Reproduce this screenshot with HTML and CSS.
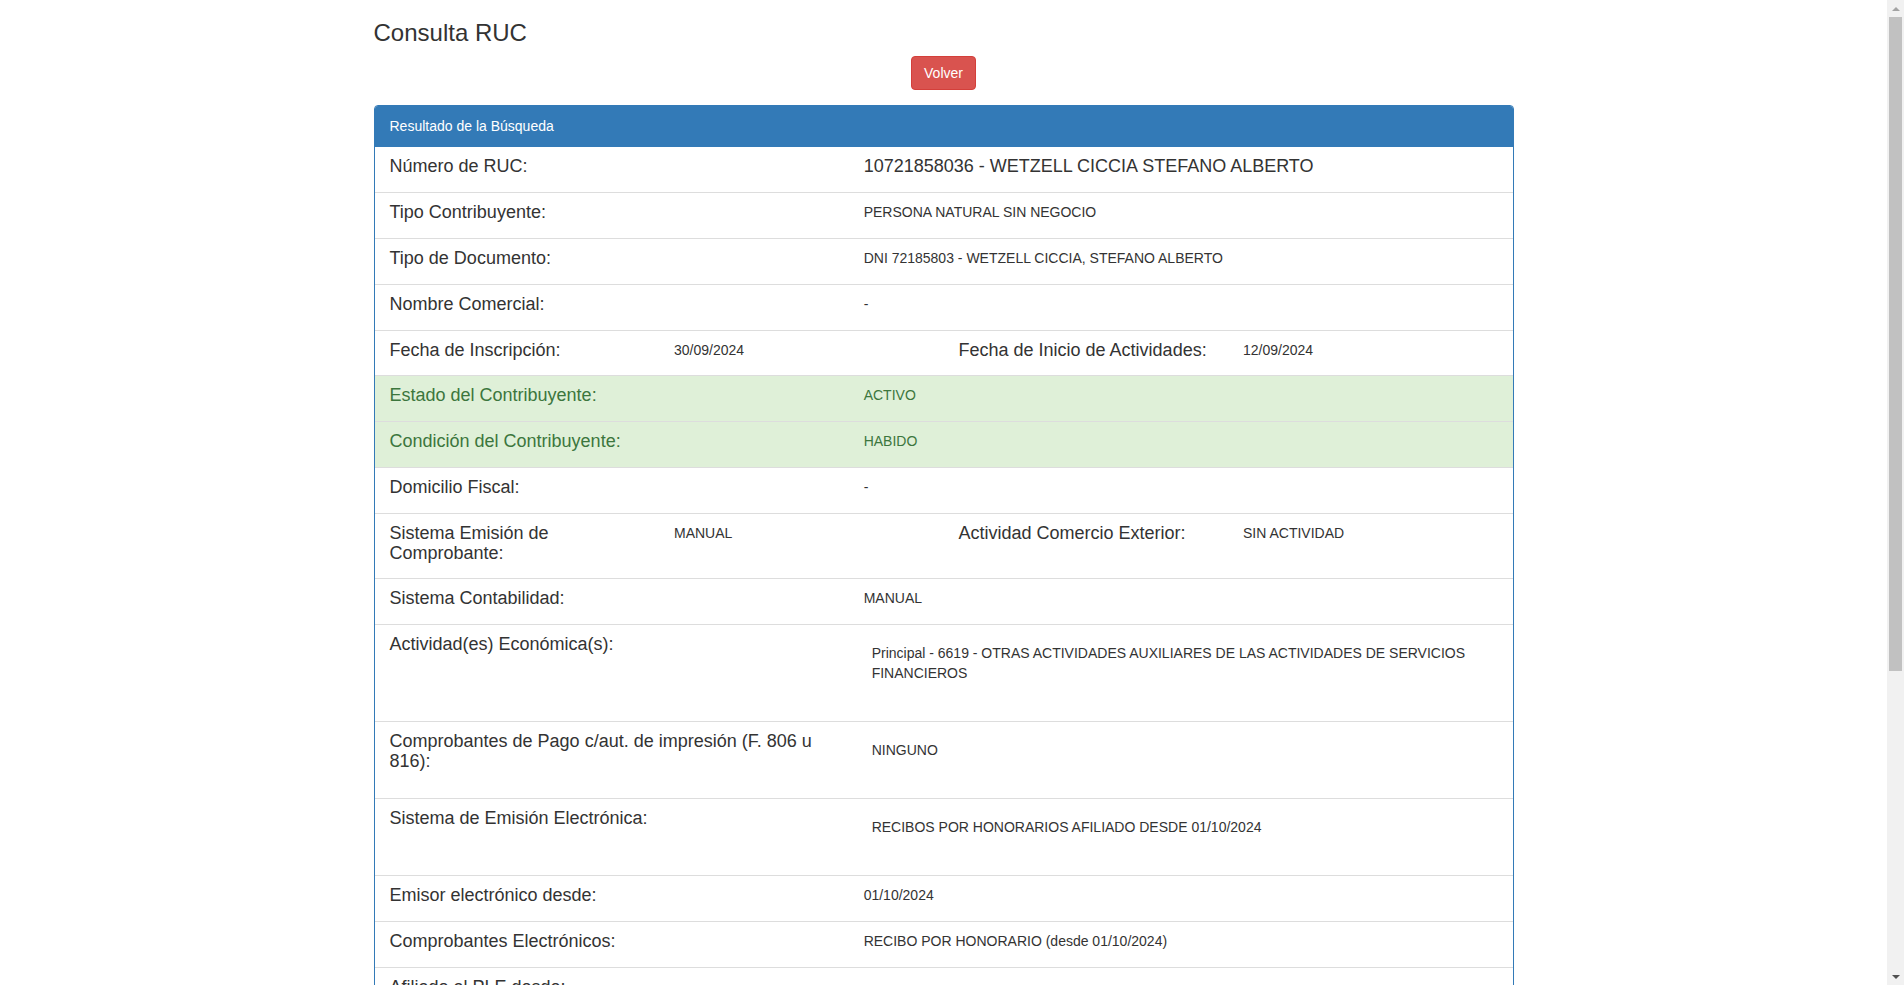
FILE: index.html
```html
<!DOCTYPE html>
<html lang="es">
<head>
<meta charset="utf-8">
<title>Consulta RUC</title>
<link rel="stylesheet" href="styles.css">
</head>
<body>
<div class="container">
  <h3 class="page-title">Consulta RUC</h3>
  <div class="actions"><button class="btn btn-danger" type="button">Volver</button></div>

  <div class="panel">
    <div class="panel-heading">Resultado de la Búsqueda</div>
    <div class="list-group">

      <div class="item">
        <div class="row row-2">
          <div class="col"><h4 class="item-heading">Número de RUC:</h4></div>
          <div class="col"><h4 class="item-heading">10721858036 - WETZELL CICCIA STEFANO ALBERTO</h4></div>
        </div>
      </div>

      <div class="item">
        <div class="row row-2">
          <div class="col"><h4 class="item-heading">Tipo Contribuyente:</h4></div>
          <div class="col"><p class="item-text">PERSONA NATURAL SIN NEGOCIO</p></div>
        </div>
      </div>

      <div class="item">
        <div class="row row-2">
          <div class="col"><h4 class="item-heading">Tipo de Documento:</h4></div>
          <div class="col"><p class="item-text">DNI 72185803 - WETZELL CICCIA, STEFANO ALBERTO</p></div>
        </div>
      </div>

      <div class="item">
        <div class="row row-2">
          <div class="col"><h4 class="item-heading">Nombre Comercial:</h4></div>
          <div class="col"><p class="item-text">-</p></div>
        </div>
      </div>

      <div class="item">
        <div class="row row-4">
          <div class="col"><h4 class="item-heading">Fecha de Inscripción:</h4></div>
          <div class="col"><p class="item-text">30/09/2024</p></div>
          <div class="col"><h4 class="item-heading">Fecha de Inicio de Actividades:</h4></div>
          <div class="col"><p class="item-text">12/09/2024</p></div>
        </div>
      </div>

      <div class="item item-success">
        <div class="row row-2">
          <div class="col"><h4 class="item-heading">Estado del Contribuyente:</h4></div>
          <div class="col"><p class="item-text">ACTIVO</p></div>
        </div>
      </div>

      <div class="item item-success">
        <div class="row row-2">
          <div class="col"><h4 class="item-heading">Condición del Contribuyente:</h4></div>
          <div class="col"><p class="item-text">HABIDO</p></div>
        </div>
      </div>

      <div class="item">
        <div class="row row-2">
          <div class="col"><h4 class="item-heading">Domicilio Fiscal:</h4></div>
          <div class="col"><p class="item-text">-</p></div>
        </div>
      </div>

      <div class="item">
        <div class="row row-4">
          <div class="col"><h4 class="item-heading">Sistema Emisión de Comprobante:</h4></div>
          <div class="col"><p class="item-text">MANUAL</p></div>
          <div class="col"><h4 class="item-heading">Actividad Comercio Exterior:</h4></div>
          <div class="col"><p class="item-text">SIN ACTIVIDAD</p></div>
        </div>
      </div>

      <div class="item">
        <div class="row row-2">
          <div class="col"><h4 class="item-heading">Sistema Contabilidad:</h4></div>
          <div class="col"><p class="item-text">MANUAL</p></div>
        </div>
      </div>

      <div class="item">
        <div class="row row-2">
          <div class="col"><h4 class="item-heading">Actividad(es) Económica(s):</h4></div>
          <div class="col">
            <table class="tbl"><tbody><tr><td>Principal - 6619 - OTRAS ACTIVIDADES AUXILIARES DE LAS ACTIVIDADES DE SERVICIOS FINANCIEROS</td></tr></tbody></table>
          </div>
        </div>
      </div>

      <div class="item">
        <div class="row row-2">
          <div class="col"><h4 class="item-heading">Comprobantes de Pago c/aut. de impresión (F. 806 u 816):</h4></div>
          <div class="col">
            <table class="tbl"><tbody><tr><td>NINGUNO</td></tr></tbody></table>
          </div>
        </div>
      </div>

      <div class="item">
        <div class="row row-2">
          <div class="col"><h4 class="item-heading">Sistema de Emisión Electrónica:</h4></div>
          <div class="col">
            <table class="tbl"><tbody><tr><td>RECIBOS POR HONORARIOS AFILIADO DESDE 01/10/2024</td></tr></tbody></table>
          </div>
        </div>
      </div>

      <div class="item">
        <div class="row row-2">
          <div class="col"><h4 class="item-heading">Emisor electrónico desde:</h4></div>
          <div class="col"><p class="item-text">01/10/2024</p></div>
        </div>
      </div>

      <div class="item">
        <div class="row row-2">
          <div class="col"><h4 class="item-heading">Comprobantes Electrónicos:</h4></div>
          <div class="col"><p class="item-text">RECIBO POR HONORARIO (desde 01/10/2024)</p></div>
        </div>
      </div>

      <div class="item">
        <div class="row row-2">
          <div class="col"><h4 class="item-heading">Afiliado al PLE desde:</h4></div>
          <div class="col"><p class="item-text">-</p></div>
        </div>
      </div>

      <div class="item">
        <div class="row row-2">
          <div class="col"><h4 class="item-heading">Padrones:</h4></div>
          <div class="col">
            <table class="tbl"><tbody><tr><td>NINGUNO</td></tr></tbody></table>
          </div>
        </div>
      </div>

    </div>
    <div class="panel-footer">
      <div class="btn-grid">
        <button class="btn btn-primary" type="button">Información Histórica</button>
        <button class="btn btn-primary" type="button">Deuda Coactiva</button>
        <button class="btn btn-primary" type="button">Omisiones Tributarias</button>
        <button class="btn btn-primary" type="button">Cantidad de Trabajadores y/o Prestadores de Servicio</button>
        <button class="btn btn-primary" type="button">Actas Probatorias</button>
        <button class="btn btn-primary" type="button">Facturas Físicas</button>
        <button class="btn btn-primary" type="button">Reactiva Perú</button>
        <button class="btn btn-primary" type="button">Programa de Garantías COVID-19</button>
        <button class="btn btn-primary" type="button">Establecimientos Anexos</button>
      </div>
      <small class="consult-date">Fecha consulta: 15/10/2024 10:21</small>
    </div>
  </div>
</div>

<div class="scrollbar" aria-hidden="true">
  <div class="sb-btn"><span class="sb-arrow-up"></span></div>
  <div class="sb-track"><div class="sb-thumb"></div></div>
  <div class="sb-btn"><span class="sb-arrow-down"></span></div>
</div>
</body>
</html>
```

FILE: styles.css
```css
* {
  box-sizing: border-box;
}

html {
  margin: 0;
  padding: 0;
}

body {
  margin: 0;
  padding: 0 17px 0 0;
  font-family: "Liberation Sans", Arial, Helvetica, sans-serif;
  font-size: 14px;
  line-height: 1.42857143;
  color: #333;
  background: #fff;
}

.container {
  width: 1170px;
  margin: 0 auto;
  padding: 0 15px;
}

.page-title {
  margin: 20px 0 10px;
  font-size: 24px;
  font-weight: normal;
  line-height: 1.1;
  color: #333;
}

.actions {
  text-align: center;
  margin-bottom: 15px;
}

.btn {
  display: inline-block;
  padding: 6px 12px;
  font-family: inherit;
  font-size: 14px;
  line-height: 1.42857143;
  border: 1px solid transparent;
  border-radius: 4px;
  cursor: pointer;
  white-space: nowrap;
}

.btn-danger {
  color: #fff;
  background-color: #d9534f;
  border-color: #d43f3a;
}

.btn-primary {
  color: #fff;
  background-color: #337ab7;
  border-color: #2e6da4;
}

.panel {
  margin-bottom: 20px;
  background: #fff;
  border: 1px solid #337ab7;
  border-radius: 4px;
  box-shadow: 0 1px 1px rgba(0, 0, 0, 0.05);
}

.panel-heading {
  padding: 10px 15px;
  color: #fff;
  background-color: #337ab7;
  border-bottom: 1px solid #337ab7;
  border-radius: 3px 3px 0 0;
  font-size: 14px;
  line-height: 20px;
}

.list-group {
  margin: 0;
}

.item {
  padding: 10px 15px;
  border-top: 1px solid #ddd;
  border-bottom: 1px solid #ddd;
  margin-bottom: -1px;
  background: #fff;
}

.item:first-child {
  border-top: 0;
}

.item-success {
  background-color: #dff0d8;
  color: #3c763d;
}

.row {
  display: grid;
  margin: 0 -15px;
}

.row-2 {
  grid-template-columns: 41.66666667% 58.33333333%;
}

.row-4 {
  grid-template-columns: repeat(4, 25%);
}

.col {
  padding: 0 15px;
  min-height: 1px;
}

.item-heading {
  margin: 0 0 5px;
  font-size: 18px;
  font-weight: normal;
  line-height: 1.1;
}

.item-text {
  margin: 0;
  line-height: 1.3;
}

.tbl {
  width: 100%;
  border-collapse: collapse;
  margin-bottom: 20px;
}

.tbl td {
  padding: 8px;
  vertical-align: top;
  line-height: 1.42857143;
}

.panel-footer {
  padding: 10px 15px;
  background-color: #f5f5f5;
  border-top: 1px solid #ddd;
  border-radius: 0 0 3px 3px;
  text-align: center;
}

.btn-grid {
  display: grid;
  grid-template-columns: repeat(3, 1fr);
  gap: 15px 30px;
  margin: 10px 0 20px;
}

.btn-grid .btn {
  width: 100%;
  white-space: normal;
}

.consult-date {
  display: block;
  font-size: 85%;
  color: #777;
  padding-bottom: 40px;
}

/* simulated classic browser scrollbar */
.scrollbar {
  position: fixed;
  top: 0;
  right: 0;
  width: 17px;
  height: 100vh;
  background: #f1f1f1;
  display: flex;
  flex-direction: column;
  z-index: 10;
}

.sb-btn {
  height: 17px;
  flex: 0 0 17px;
  display: flex;
  align-items: center;
  justify-content: center;
}

.sb-arrow-up {
  width: 0;
  height: 0;
  border-left: 4px solid transparent;
  border-right: 4px solid transparent;
  border-bottom: 4px solid #a3a3a3;
}

.sb-arrow-down {
  width: 0;
  height: 0;
  border-left: 4px solid transparent;
  border-right: 4px solid transparent;
  border-top: 4px solid #505050;
}

.sb-track {
  flex: 1;
  padding: 0 2px;
}

.sb-thumb {
  height: 654px;
  background: #c1c1c1;
}
```
